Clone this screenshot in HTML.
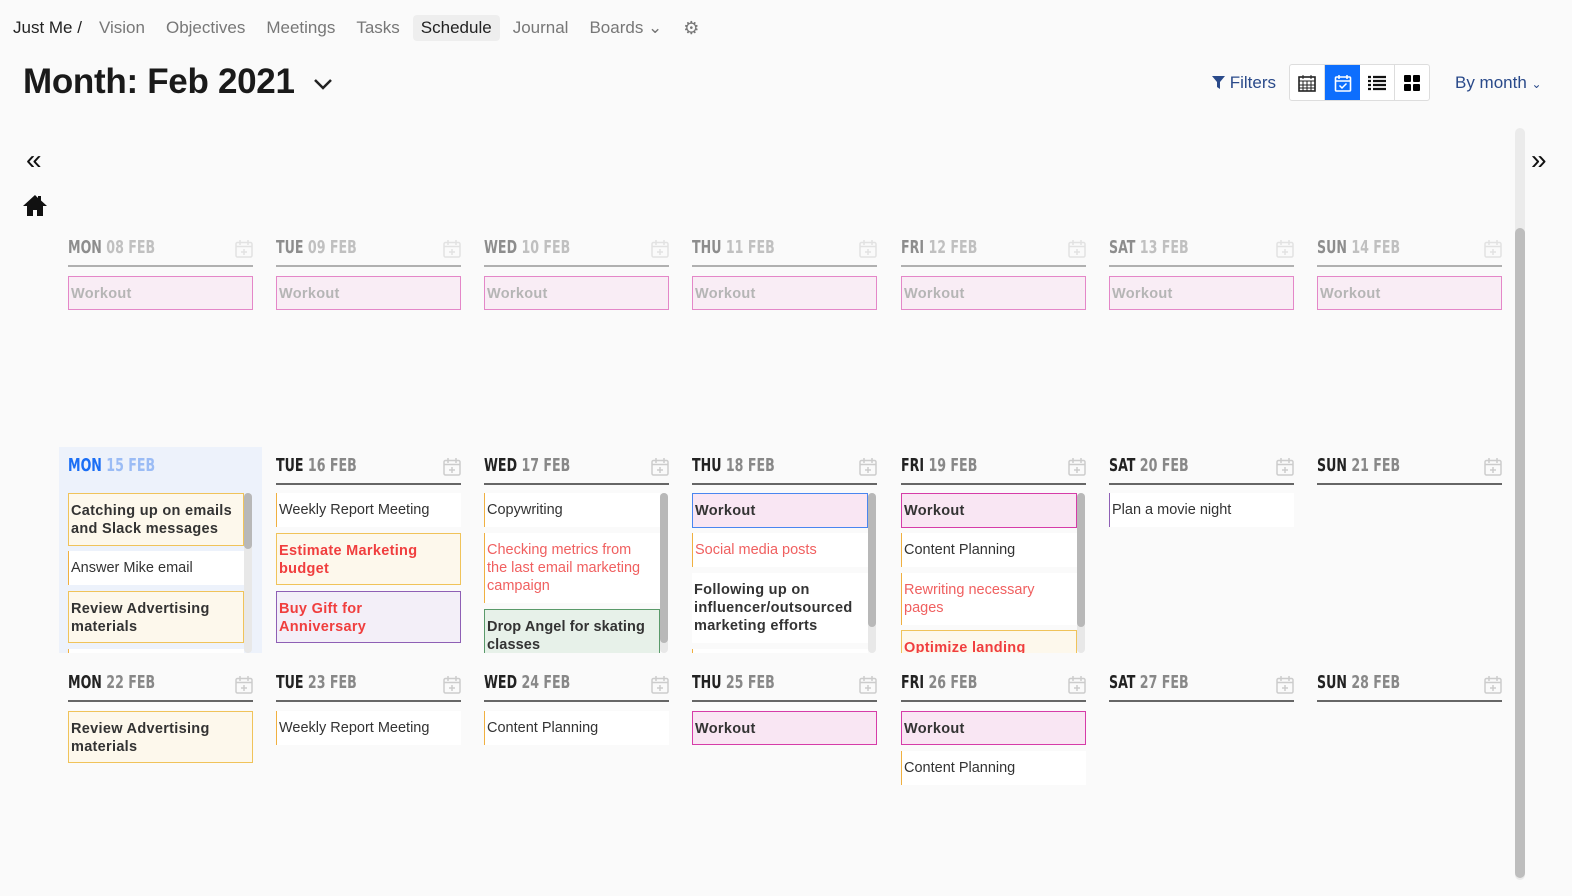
<!DOCTYPE html>
<html><head><meta charset="utf-8"><style>
*{box-sizing:border-box;margin:0;padding:0}
body{width:1572px;height:896px;background:#fafafa;font-family:"Liberation Sans",sans-serif;color:#333;position:relative;overflow:hidden}
.nav{position:absolute;top:15px;left:13px;font-size:17px;color:#777;display:flex;align-items:center}
.nav span{margin-right:21px}
.nav .cur{background:#eee;border-radius:4px;padding:3px 8px;margin-left:-8px;margin-right:13px;color:#222}
h1{position:absolute;left:23px;top:62px;font-size:35px;font-weight:bold;color:#1a1a1a;letter-spacing:-0.3px}
.a{position:absolute}
.hd{position:absolute;font-family:"Liberation Sans Narrow","DejaVu Sans Condensed",sans-serif;font-weight:bold;font-size:18px;color:#222;transform:scaleX(.78);transform-origin:left}
.hd i{font-style:normal;color:#888}
.line{position:absolute;height:2px;background:#666}
.cal{position:absolute}
.ev{position:absolute;font-size:14.5px;line-height:18px;padding:8px 10px 8px 2px;background:#fff;border-left:1px solid #f0b040}
.pk{background:#f9e6f3;border:1.5px solid #d63ca8;font-weight:bold;letter-spacing:.3px}
.yl{background:#fdf8ec;border:1.5px solid #f0c35a;font-weight:bold;letter-spacing:.3px}
.pu{background:#f3eff8;border:1.5px solid #8e5fb5;font-weight:bold;letter-spacing:.3px}
.gr{background:#e7f1e9;border:1.5px solid #5a9a6a;font-weight:bold;letter-spacing:.1px}
.r{color:#f03e3e}.lr{color:#f06060}
.sb{position:absolute;width:8px;background:#e8e8e8;border-radius:4px}
.sb b{position:absolute;left:0;width:8px;background:#b8b8b8;border-radius:4px}
.faded{opacity:.5}
</style></head><body>
<div class="nav"><span style="color:#222;margin-right:17px">Just Me /</span><span>Vision</span><span>Objectives</span><span>Meetings</span><span>Tasks</span><span class="cur">Schedule</span><span>Journal</span><span>Boards ⌄</span><span style="font-size:18px">⚙</span></div>
<h1>Month: Feb 2021</h1>
<svg class="a" style="left:313px;top:77px" width="20" height="14"><path d="M2 3l8 8 8-8" stroke="#222" stroke-width="2.5" fill="none"/></svg>
<div class="a" style="left:1212px;top:73px;font-size:17px;color:#2a4a8a">
<svg width="13" height="14" style="vertical-align:-1px"><path d="M0 1h13l-5 6v7l-3-2V7z" fill="#2a4a8a"/></svg> Filters</div>
<div class="a" style="left:1289px;top:64px;width:141px;height:37px;border:1px solid #ddd;border-radius:3px;background:#fff;display:flex">
<div style="width:35px;border-right:1px solid #ddd;display:flex;align-items:center;justify-content:center"><svg width="18" height="18"><rect x="1" y="3" width="16" height="14" fill="none" stroke="#222" stroke-width="1.6"/><path d="M1 7h16M5 1v4M13 1v4M1 11h16M1 14h16M5 7v10M9 7v10M13 7v10" stroke="#222"/></svg></div>
<div style="width:36px;background:#0d6efd;display:flex;align-items:center;justify-content:center"><svg width="18" height="18"><rect x="1.5" y="3" width="15" height="14" rx="1" fill="none" stroke="#fff" stroke-width="1.6"/><path d="M1 7h16M5 1v4M13 1v4M5.5 11.5l2.5 2.5 4.5-4.5" stroke="#fff" stroke-width="1.5" fill="none"/></svg></div>
<div style="width:35px;border-right:1px solid #ddd;display:flex;align-items:center;justify-content:center"><svg width="18" height="16"><path d="M0 2h3M5 2h13M0 6h3M5 6h13M0 10h3M5 10h13M0 14h3M5 14h13" stroke="#111" stroke-width="2.2"/></svg></div>
<div style="width:34px;display:flex;align-items:center;justify-content:center"><svg width="16" height="16"><rect x="0" y="0" width="7" height="7" rx="1"/><rect x="9" y="0" width="7" height="7" rx="1"/><rect x="0" y="9" width="7" height="7" rx="1"/><rect x="9" y="9" width="7" height="7" rx="1"/></svg></div>
</div>
<div class="a" style="left:1455px;top:73px;font-size:17px;color:#2a4a8a">By month <span style="font-size:12px">⌄</span></div>
<div class="a" style="left:1515px;top:128px;width:10px;height:752px;background:#ebebeb;border-radius:5px"><div style="position:absolute;top:100px;width:10px;height:650px;background:#bdbdbd;border-radius:5px"></div></div>
<div class="a" style="left:26px;top:146px;font-size:28px;color:#111;line-height:28px">«</div>
<div class="a" style="left:1531px;top:146px;font-size:28px;color:#111;line-height:28px">»</div>
<svg class="a" style="left:22px;top:194px" width="26" height="22"><path d="M13 1L1 12h4v10h6v-6h4v6h6V12h4L19 6.5V2h-3v2z" fill="#111"/></svg>

<div class="faded">
<div class="hd" style="left:68px;top:237px">MON <i>08 FEB</i></div>
<div class="hd" style="left:276px;top:237px">TUE <i>09 FEB</i></div>
<div class="hd" style="left:484px;top:237px">WED <i>10 FEB</i></div>
<div class="hd" style="left:692px;top:237px">THU <i>11 FEB</i></div>
<div class="hd" style="left:901px;top:237px">FRI <i>12 FEB</i></div>
<div class="hd" style="left:1109px;top:237px">SAT <i>13 FEB</i></div>
<div class="hd" style="left:1317px;top:237px">SUN <i>14 FEB</i></div>
</div>
<div id="w1"></div>

<div class="a" style="left:59px;top:447px;width:203px;height:206px;background:#edf2fb"></div>
<div class="hd" style="left:68px;top:455px;color:#1a6ef5">MON <i style="color:#9bbcf5">15 FEB</i></div>
<div class="hd" style="left:276px;top:455px">TUE <i>16 FEB</i></div>
<div class="hd" style="left:484px;top:455px">WED <i>17 FEB</i></div>
<div class="hd" style="left:692px;top:455px">THU <i>18 FEB</i></div>
<div class="hd" style="left:901px;top:455px">FRI <i>19 FEB</i></div>
<div class="hd" style="left:1109px;top:455px">SAT <i>20 FEB</i></div>
<div class="hd" style="left:1317px;top:455px">SUN <i>21 FEB</i></div>

<div class="hd" style="left:68px;top:672px">MON <i>22 FEB</i></div>
<div class="hd" style="left:276px;top:672px">TUE <i>23 FEB</i></div>
<div class="hd" style="left:484px;top:672px">WED <i>24 FEB</i></div>
<div class="hd" style="left:692px;top:672px">THU <i>25 FEB</i></div>
<div class="hd" style="left:901px;top:672px">FRI <i>26 FEB</i></div>
<div class="hd" style="left:1109px;top:672px">SAT <i>27 FEB</i></div>
<div class="hd" style="left:1317px;top:672px">SUN <i>28 FEB</i></div>

<script>
var xs=[68,276,484,692,901,1109,1317];
var h='';
var ic='<svg width="18" height="19"><rect x="1" y="3.5" width="16" height="14.5" rx="1.5" fill="none" stroke="#ccc" stroke-width="1.5"/><path d="M5 1v5M13 1v5M1 7.5h16M9 10v6M6 13h6" stroke="#ccc" stroke-width="1.5"/></svg>';
xs.forEach(function(x,i){
 [[265,238,0.5],[483,456,1],[700,674,1]].forEach(function(r,j){
  var c=(j==1&&i==0)?'#3a7ef5':'#666';
  h+='<div class="line" style="left:'+x+'px;top:'+r[0]+'px;width:185px;background:'+c+';opacity:'+r[2]+'"></div>';
  h+='<div class="cal" style="left:'+(x+167)+'px;top:'+(r[1]+1)+'px;opacity:'+r[2]+'">'+ic+'</div>';
 });
 h+='<div class="ev pk" style="left:'+x+'px;top:276px;width:185px;height:34px;color:#888;opacity:.6">Workout</div>';
});
document.getElementById('w1').innerHTML=h;
</script>

<div class="a" style="left:68px;top:493px;width:185px;height:160px;overflow:hidden">
<div class="ev yl" style="left:0;top:0;width:176px;height:53px">Catching up on emails and Slack messages</div>
<div class="ev" style="left:0;top:58px;width:176px;height:34px">Answer Mike email</div>
<div class="ev yl" style="left:0;top:98px;width:176px;height:52px">Review Advertising materials</div>
<div class="ev" style="left:0;top:156px;width:176px;height:34px"></div>
<div class="sb" style="left:176px;top:0;height:160px"><b style="top:0;height:56px"></b></div>
</div>
<div class="ev" style="left:276px;top:493px;width:185px;height:34px">Weekly Report Meeting</div>
<div class="ev yl r" style="left:276px;top:533px;width:185px;height:52px">Estimate Marketing budget</div>
<div class="ev pu r" style="left:276px;top:591px;width:185px;height:52px;padding-right:60px">Buy Gift for Anniversary</div>

<div class="a" style="left:484px;top:493px;width:185px;height:160px;overflow:hidden">
<div class="ev" style="left:0;top:0;width:176px;height:34px">Copywriting</div>
<div class="ev lr" style="left:0;top:40px;width:176px;height:70px;padding-right:8px">Checking metrics from the last email marketing campaign</div>
<div class="ev gr" style="left:0;top:116px;width:176px;height:52px;padding-right:2px">Drop Angel for skating classes</div>
<div class="sb" style="left:176px;top:0;height:160px"><b style="top:0;height:150px"></b></div>
</div>
<div class="a" style="left:692px;top:493px;width:185px;height:160px;overflow:hidden">
<div class="ev pk" style="left:0;top:0;width:176px;height:35px;border-color:#4a86f0">Workout</div>
<div class="ev lr" style="left:0;top:40px;width:176px;height:34px">Social media posts</div>
<div class="ev" style="left:0;top:80px;width:176px;height:70px;font-weight:bold;border-left:none;letter-spacing:.3px">Following up on influencer/outsourced marketing efforts</div>
<div class="ev" style="left:0;top:156px;width:176px;height:34px"></div>
<div class="sb" style="left:176px;top:0;height:160px"><b style="top:0;height:134px"></b></div>
</div>
<div class="a" style="left:901px;top:493px;width:185px;height:160px;overflow:hidden">
<div class="ev pk" style="left:0;top:0;width:176px;height:35px">Workout</div>
<div class="ev" style="left:0;top:40px;width:176px;height:34px">Content Planning</div>
<div class="ev lr" style="left:0;top:80px;width:176px;height:52px">Rewriting necessary pages</div>
<div class="ev yl r" style="left:0;top:137px;width:176px;height:52px">Optimize landing</div>
<div class="sb" style="left:176px;top:0;height:160px"><b style="top:0;height:134px"></b></div>
</div>
<div class="ev" style="left:1109px;top:493px;width:185px;height:34px;border-left-color:#8e5fb5">Plan a movie night</div>

<div class="ev yl" style="left:68px;top:711px;width:185px;height:52px">Review Advertising materials</div>
<div class="ev" style="left:276px;top:711px;width:185px;height:34px">Weekly Report Meeting</div>
<div class="ev" style="left:484px;top:711px;width:185px;height:34px">Content Planning</div>
<div class="ev pk" style="left:692px;top:711px;width:185px;height:34px">Workout</div>
<div class="ev pk" style="left:901px;top:711px;width:185px;height:34px">Workout</div>
<div class="ev" style="left:901px;top:751px;width:185px;height:34px">Content Planning</div>
</body></html>
